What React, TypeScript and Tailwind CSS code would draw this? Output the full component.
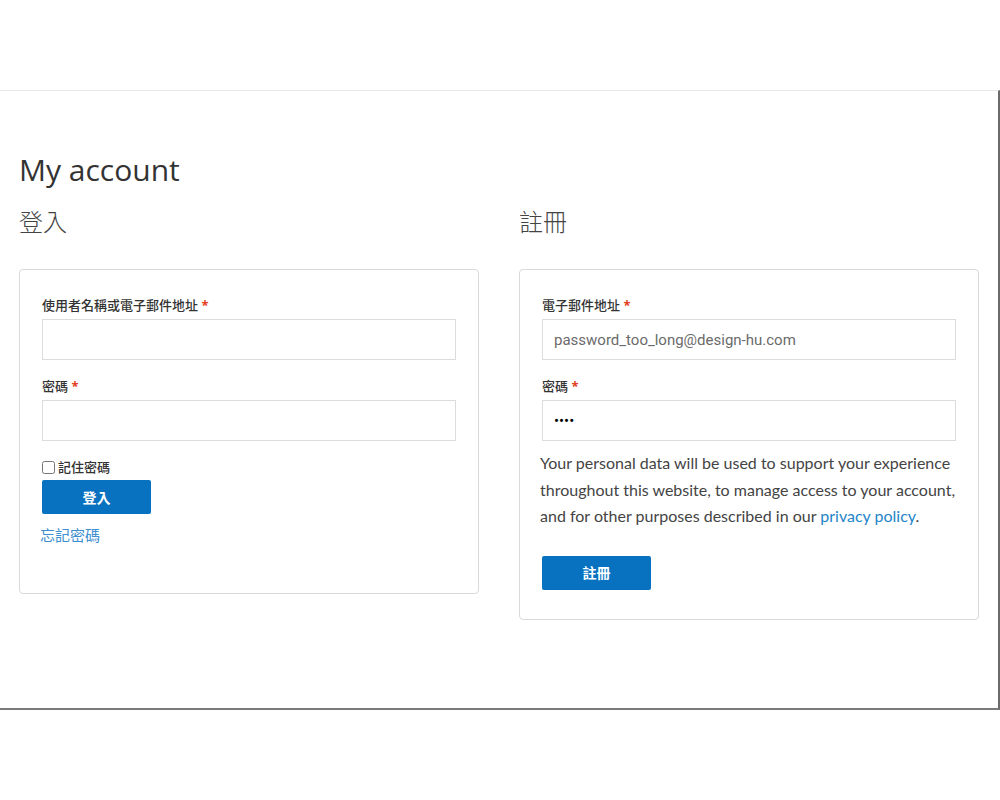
import React from 'react';

const CJK = "font-['Noto_Sans','Noto_Sans_CJK_TC',sans-serif]";

function Label({ text }: { text: string }) {
  return (
    <label className="block text-[13px] leading-[20px] font-medium text-[#333] mb-[4px]">
      {text} <span className="text-[#e2401c] font-bold">*</span>
    </label>
  );
}

function Field({ value, type = 'text', muted }: { value?: string; type?: string; muted?: boolean }) {
  return (
    <input
      type={type}
      defaultValue={value}
      readOnly
      className={`block w-full h-[41px] border border-[#dcdcdc] bg-white px-[11px] text-[15px] outline-none font-['Roboto','Noto_Sans_CJK_TC',sans-serif] ${
        muted ? 'text-[#6b6b6b]' : 'text-black'
      }`}
    />
  );
}

export default function App() {
  return (
    <div className={`bg-white min-h-[800px] ${CJK}`}>
      <div className="h-[90px]" />
      {/* Page frame */}
      <div className="h-[620px] border-t border-t-[#e8e8e8] border-r-2 border-r-[#6b6b6b] border-b-2 border-b-[#7a7a7a] pl-[19px] pr-[19px] pt-[59px]">
        <h1 className="text-[30px] leading-[40px] text-[#333] font-['Open_Sans','Noto_Sans_CJK_TC',sans-serif]">
          My account
        </h1>
        <div className="mt-[14px] grid grid-cols-[460px_460px] gap-[40px]">
          {/* Login */}
          <div>
            <h2 className="text-[24px] leading-[34px] text-[#444] font-light pt-[1px]">登入</h2>
            <div className="mt-[30px] border border-[#d9d9d9] rounded-[4px] px-[22px] pt-[25px] h-[325px]">
              <Label text="使用者名稱或電子郵件地址" />
              <Field />
              <div className="mt-[16px]">
                <Label text="密碼" />
                <Field type="password" />
              </div>
              <label className="mt-[17px] flex items-center gap-[3px] text-[13px] leading-[18px] font-medium text-[#333]">
                <input type="checkbox" className="w-[13px] h-[13px] m-0" />
                記住密碼
              </label>
              <button className="mt-[4px] block w-[109px] h-[34px] bg-[#0872c1] rounded-[2px] text-white text-[14px] font-bold">
                登入
              </button>
              <a href="#" className="mt-[10px] -ml-[2px] block text-[15px] leading-[22px] text-[#3d8fd1]">
                忘記密碼
              </a>
            </div>
          </div>
          {/* Register */}
          <div>
            <h2 className="text-[24px] leading-[34px] text-[#444] font-light pt-[1px]">註冊</h2>
            <div className="mt-[30px] border border-[#d9d9d9] rounded-[4px] pl-[20px] pr-[22px] pt-[25px] h-[351px]">
              <div className="pl-[2px]">
                <Label text="電子郵件地址" />
                <Field value="password_too_long@design-hu.com" muted />
                <div className="mt-[16px]">
                  <Label text="密碼" />
                  <Field type="password" value="1234" />
                </div>
              </div>
              <p className="mt-[9px] text-[16px] leading-[26.5px] text-[#444] font-['Lato','Noto_Sans_CJK_TC',sans-serif]">
                Your personal data will be used to support your experience throughout this website, to manage access to
                your account, and for other purposes described in our{' '}
                <a href="#" className="text-[#1e85c8]">
                  privacy policy
                </a>
                .
              </p>
              <button className="mt-[26px] ml-[2px] block w-[109px] h-[34px] bg-[#0872c1] rounded-[2px] text-white text-[14px] font-bold">
                註冊
              </button>
            </div>
          </div>
        </div>
      </div>
    </div>
  );
}
